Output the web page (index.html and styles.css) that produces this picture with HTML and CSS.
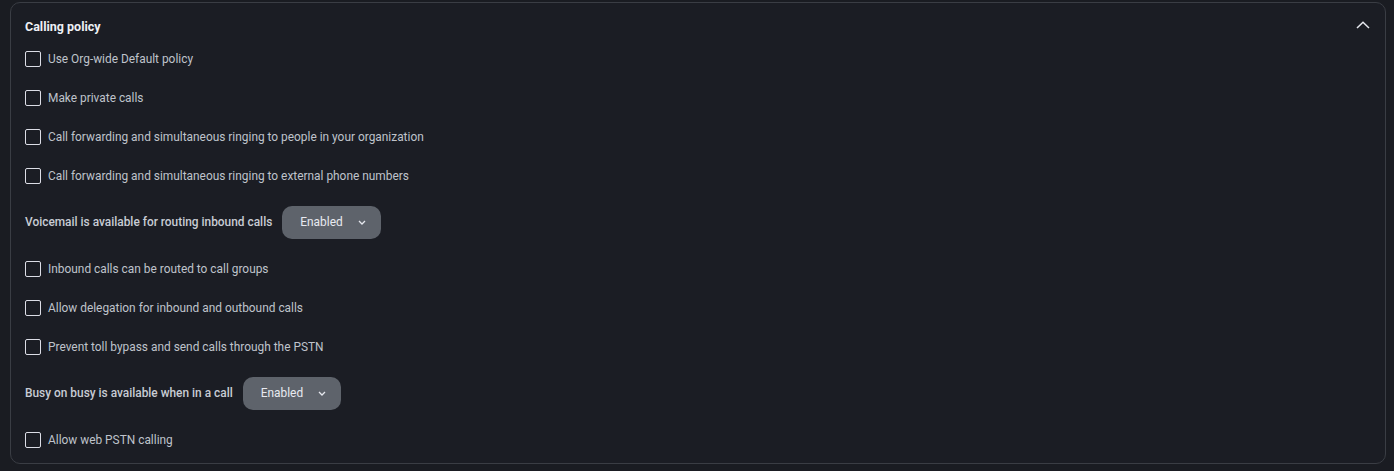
FILE: index.html
```html
<!doctype html>
<html>
<head>
<meta charset="UTF-8">
<title>Calling policy</title>
<link rel="stylesheet" href="styles.css">
</head>
<body>
  <section class="card">
    <header class="card-head">
      <span class="card-title">Calling policy</span>
      <svg class="collapse" width="14" height="8" viewBox="0 0 14 8"><path d="M1 7 L7 1.2 L13 7" fill="none" stroke="#e6e8ee" stroke-width="1.5"/></svg>
    </header>

    <label class="row"><span class="box"></span>Use Org-wide Default policy</label>
    <label class="row"><span class="box"></span>Make private calls</label>
    <label class="row"><span class="box"></span>Call forwarding and simultaneous ringing to people in your organization</label>
    <label class="row"><span class="box"></span>Call forwarding and simultaneous ringing to external phone numbers</label>

    <div class="row select-row">
      <span class="select-label">Voicemail is available for routing inbound calls</span>
      <button class="select">Enabled <svg width="8" height="5" viewBox="0 0 8 5"><path d="M1 1 L4 4 L7 1" fill="none" stroke="#e6e8ee" stroke-width="1.3"/></svg></button>
    </div>

    <label class="row"><span class="box"></span>Inbound calls can be routed to call groups</label>
    <label class="row"><span class="box"></span>Allow delegation for inbound and outbound calls</label>
    <label class="row"><span class="box"></span>Prevent toll bypass and send calls through the PSTN</label>

    <div class="row select-row">
      <span class="select-label">Busy on busy is available when in a call</span>
      <button class="select">Enabled <svg width="8" height="5" viewBox="0 0 8 5"><path d="M1 1 L4 4 L7 1" fill="none" stroke="#e6e8ee" stroke-width="1.3"/></svg></button>
    </div>

    <label class="row"><span class="box"></span>Allow web PSTN calling</label>
  </section>
</body>
</html>
```

FILE: styles.css
```css
body {
  margin: 0;
  background: #1a1c22;
  font-family: Roboto, "Liberation Sans", sans-serif;
  font-size: 11.9px;
  color: #bfc3cb;
}

.card {
  margin: 2px 8px 0 10px;
  height: 462px;
  box-sizing: border-box;
  border: 1px solid #3a3d44;
  border-radius: 10px;
  background: #1b1d24;
  padding: 0 15px 0 14px;
  display: flex;
  flex-direction: column;
}

.card-head {
  display: flex;
  align-items: center;
  justify-content: space-between;
  height: 18px;
  padding: 14px 0 4px;
}

.card-title {
  font-size: 12.5px;
  font-weight: 700;
  color: #eef0f5;
}

.collapse {
  margin-top: -2px;
}

.row {
  display: flex;
  align-items: center;
  height: 39px;
  flex-shrink: 0;
}

.box {
  width: 16px;
  height: 16px;
  box-sizing: border-box;
  border: 1.5px solid #dcdde6;
  border-radius: 2px;
  margin-right: 7px;
}

.select-row {
  height: 54px;
}

.select-label {
  font-weight: 500;
  color: #c8ccd4;
  margin-right: 10px;
}

.select {
  display: flex;
  align-items: center;
  gap: 15px;
  height: 33px;
  padding: 0 15px 0 18px;
  border: none;
  border-radius: 10px;
  background: #5e636b;
  color: #e8eaf0;
  font-family: inherit;
  font-size: 11.9px;
}
```
